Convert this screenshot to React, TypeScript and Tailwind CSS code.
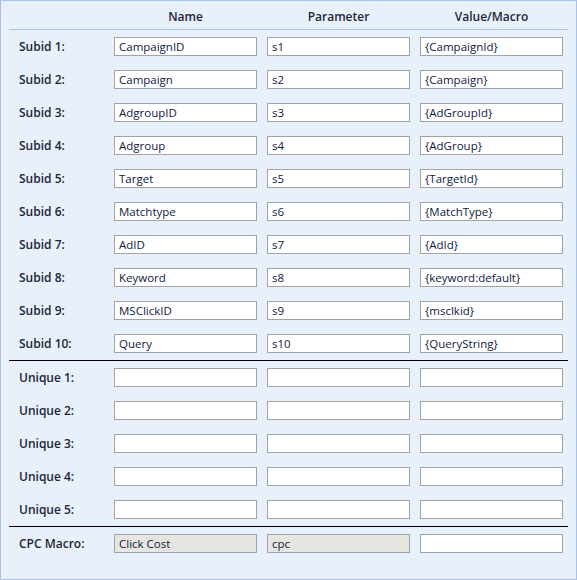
import React from 'react';

interface Row {
    label: string;
    name: string;
    param: string;
    value: string;
}

const subids: Row[] = [
    { label: 'Subid 1:', name: 'CampaignID', param: 's1', value: '{CampaignId}' },
    { label: 'Subid 2:', name: 'Campaign', param: 's2', value: '{Campaign}' },
    { label: 'Subid 3:', name: 'AdgroupID', param: 's3', value: '{AdGroupId}' },
    { label: 'Subid 4:', name: 'Adgroup', param: 's4', value: '{AdGroup}' },
    { label: 'Subid 5:', name: 'Target', param: 's5', value: '{TargetId}' },
    { label: 'Subid 6:', name: 'Matchtype', param: 's6', value: '{MatchType}' },
    { label: 'Subid 7:', name: 'AdID', param: 's7', value: '{AdId}' },
    { label: 'Subid 8:', name: 'Keyword', param: 's8', value: '{keyword:default}' },
    { label: 'Subid 9:', name: 'MSClickID', param: 's9', value: '{msclkid}' },
    { label: 'Subid 10:', name: 'Query', param: 's10', value: '{QueryString}' },
];

const uniques = ['Unique 1:', 'Unique 2:', 'Unique 3:', 'Unique 4:', 'Unique 5:'];

const Field: React.FC<{ value?: string; disabled?: boolean }> = ({ value = '', disabled }) => (
    <input
        type="text"
        defaultValue={value}
        disabled={disabled}
        className={
            'w-[143px] h-[19px] border border-[#a3a3a3] px-[4px] text-[11.5px] text-[#102040] outline-none ' +
            (disabled ? 'bg-[#e6e5df]' : 'bg-white')
        }
    />
);

const FormRow: React.FC<{ label: string; children: React.ReactNode }> = ({ label, children }) => (
    <div className="h-[33px] flex items-center">
        <div className="w-[105px] pl-[10px] text-[12px] font-semibold text-[#1c2636]">{label}</div>
        <div className="flex gap-[10px]">{children}</div>
    </div>
);

export default function App() {
    return (
        <div
            className="w-[577px] h-[580px] bg-[#e8f0fc] border border-[#a9c2ec] px-[8px]"
            style={{ fontFamily: '"Open Sans", "Liberation Sans", sans-serif' }}
        >
            <div className="h-[29px] pt-[4px] flex items-center border-b border-[#a9c2ec] text-[12px] font-semibold text-[#1c2636]">
                <div className="w-[105px]" />
                <div className="flex gap-[10px]">
                    <div className="w-[143px] text-center">Name</div>
                    <div className="w-[143px] text-center">Parameter</div>
                    <div className="w-[143px] text-center">Value/Macro</div>
                </div>
            </div>

            {subids.map((r) => (
                <FormRow key={r.label} label={r.label}>
                    <Field value={r.name} />
                    <Field value={r.param} />
                    <Field value={r.value} />
                </FormRow>
            ))}

            <div className="border-t border-black" />

            {uniques.map((u) => (
                <FormRow key={u} label={u}>
                    <Field />
                    <Field />
                    <Field />
                </FormRow>
            ))}

            <div className="border-t border-black" />

            <FormRow label="CPC Macro:">
                <Field value="Click Cost" disabled />
                <Field value="cpc" disabled />
                <Field />
            </FormRow>
        </div>
    );
}
